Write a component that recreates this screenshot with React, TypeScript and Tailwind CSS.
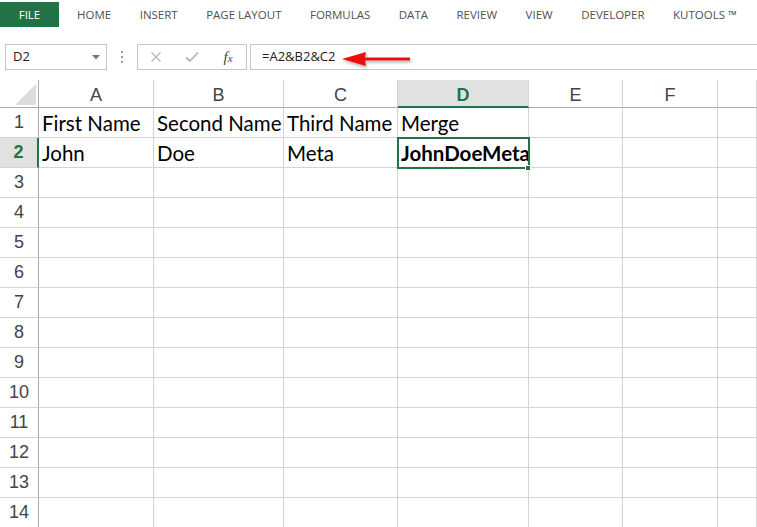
import React from "react";

const cols = ["A", "B", "C", "D", "E", "F", "G"];
const data: Record<string, string> = {
  A1: "First Name",
  B1: "Second Name",
  C1: "Third Name",
  D1: "Merge",
  A2: "John",
  B2: "Doe",
  C2: "Meta",
  D2: "JohnDoeMeta",
};

const tabs = ["HOME", "INSERT", "PAGE LAYOUT", "FORMULAS", "DATA", "REVIEW", "VIEW", "DEVELOPER", "KUTOOLS ™"];

export default function App() {
  const rows = Array.from({ length: 14 }, (_, i) => i + 1);
  return (
    <div className="w-[757px] h-[527px] overflow-hidden bg-white relative" style={{ fontFamily: "'Open Sans', 'Liberation Sans', sans-serif" }}>
      {/* Ribbon tabs */}
      <div className="flex items-stretch h-[25px] mt-[2px]">
        <div className="w-[59px] bg-[#217346] text-white text-[11.5px] flex items-center justify-center">FILE</div>
        <div className="flex items-center gap-[28.5px] pl-[18px] text-[11.5px] text-[#505050]">
          {tabs.map((t) => (
            <span key={t}>{t}</span>
          ))}
        </div>
      </div>

      {/* Formula bar */}
      <div className="flex items-stretch h-[26px] mt-[17px] relative">
        <div className="ml-[5px] w-[102px] border border-[#c6c6c6] flex items-center justify-between pl-[7px] pr-[6px] text-[13px] text-[#222]">
          <span>D2</span>
          <svg width="8" height="5" viewBox="0 0 8 5"><path d="M0 0 L8 0 L4 4.5 Z" fill="#777" /></svg>
        </div>
        <div className="w-[30px] flex flex-col items-center justify-center gap-[3px]">
          <span className="w-[2px] h-[2px] bg-[#9a9a9a]" />
          <span className="w-[2px] h-[2px] bg-[#9a9a9a]" />
          <span className="w-[2px] h-[2px] bg-[#9a9a9a]" />
        </div>
        <div className="w-[110px] border border-[#c6c6c6] flex items-center">
          <div className="w-[36px] flex justify-center">
            <svg width="12" height="12" viewBox="0 0 12 12"><path d="M1.5 1.5 L10.5 10.5 M10.5 1.5 L1.5 10.5" stroke="#b5b5b5" strokeWidth="1.2" /></svg>
          </div>
          <div className="w-[36px] flex justify-center">
            <svg width="14" height="12" viewBox="0 0 14 12"><path d="M1 6.5 L5 10 L13 1.5" stroke="#b5b5b5" strokeWidth="1.8" fill="none" /></svg>
          </div>
          <div className="flex-1 flex justify-center text-[#444] text-[15px] italic leading-none" style={{ fontFamily: "'Liberation Serif', serif" }}>
            <span>f<span className="text-[11px]">x</span></span>
          </div>
        </div>
        <div className="ml-[3px] flex-1 border-t border-b border-l border-[#c6c6c6] flex items-center pl-[11px] text-[13px] text-[#222]">
          =A2&amp;B2&amp;C2
        </div>
        <svg className="absolute left-[338px] top-[6px]" width="76" height="20" viewBox="0 0 76 20">
          <defs>
            <filter id="sh" x="-20%" y="-50%" width="140%" height="200%">
              <feDropShadow dx="1" dy="2" stdDeviation="1.5" floodColor="#000" floodOpacity="0.3" />
            </filter>
          </defs>
          <g filter="url(#sh)">
            <path d="M4 9 L28 2 L27 7.5 L72 7.5 L72 10.5 L27 10.5 L28 16 Z" fill="#ee1111" />
          </g>
        </svg>
      </div>

      {/* Grid */}
      <div
        className="mt-[10px] grid relative"
        style={{ gridTemplateColumns: "39px 115px 130px 114px 131px 94px 95px 39px", gridTemplateRows: "28px repeat(14, 30px)" }}
      >
        {/* Corner */}
        <div className="border-r border-b border-[#ababab] relative">
          <svg className="absolute left-[15px] top-[4px]" width="21" height="21" viewBox="0 0 21 21"><path d="M21 0 L21 21 L0 21 Z" fill="#dcdcdc" /></svg>
        </div>
        {cols.map((c) => (
          <div
            key={c}
            className={
              c === "D"
                ? "bg-[#e1e1e1] border-r border-[#d4d4d4] border-b-2 border-b-[#217346] flex items-center justify-center pt-[4px] text-[18px] font-bold text-[#217346]"
                : "border-r border-[#d4d4d4] border-b border-b-[#ababab] flex items-center justify-center pt-[4px] text-[18px] text-[#444]"
            }
            style={{ fontFamily: "'Liberation Sans', sans-serif" }}
          >
            {c === "G" ? "" : c}
          </div>
        ))}
        {rows.map((r) => (
          <React.Fragment key={r}>
            <div
              className={
                r === 2
                  ? "bg-[#e1e1e1] border-r-2 border-r-[#217346] border-b border-[#d4d4d4] flex items-center justify-center text-[18px] font-bold text-[#217346]"
                  : "border-r border-r-[#ababab] border-b border-[#d4d4d4] flex items-center justify-center text-[18px] text-[#444]"
              }
              style={{ fontFamily: "'Liberation Sans', sans-serif" }}
            >
              {r}
            </div>
            {cols.map((c) => {
              const v = data[c + r];
              const bold = c === "D" && r === 2;
              return (
                <div
                  key={c}
                  className={
                    "border-r border-b border-[#d4d4d4] flex items-end pb-[4px] pl-[3px] text-[20.5px] text-black whitespace-nowrap overflow-hidden leading-none h-[30px]" +
                    (bold ? " font-bold" : "")
                  }
                  style={{ fontFamily: "Lato, 'Liberation Sans', sans-serif" }}
                >
                  {v ?? ""}
                </div>
              );
            })}
          </React.Fragment>
        ))}
        {/* Selection */}
        <div className="absolute left-[397px] top-[57px] w-[133px] h-[32px] border-2 border-[#217346] pointer-events-none" />
        <div className="absolute left-[525px] top-[85px] w-[6px] h-[6px] bg-[#217346] border border-white" />
      </div>
    </div>
  );
}
